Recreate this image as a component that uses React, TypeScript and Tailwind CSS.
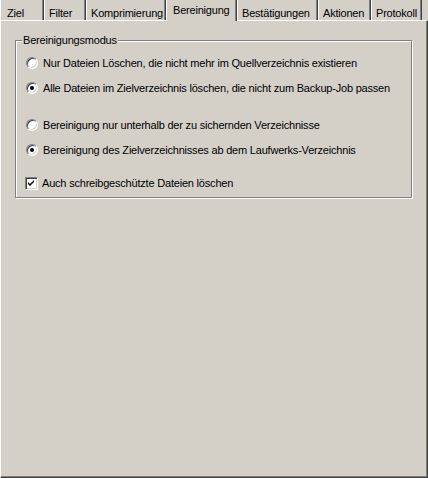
import React from 'react';

interface Tab {
  label: string;
  width: number;
}

const tabs: Tab[] = [
  { label: 'Ziel', width: 44 },
  { label: 'Filter', width: 42 },
  { label: 'Komprimierung', width: 80 },
  { label: 'Bereinigung', width: 71 },
  { label: 'Bestätigungen', width: 81 },
  { label: 'Aktionen', width: 53 },
  { label: 'Protokoll', width: 51 },
];

const activeTab = 'Bereinigung';

const Radio: React.FC<{ checked?: boolean }> = ({ checked }) => (
  <span className="relative flex h-[12px] w-[12px] shrink-0 items-center justify-center rounded-full border border-t-[#808080] border-l-[#808080] border-r-white border-b-white bg-white shadow-[inset_1px_1px_0_#404040,inset_-1px_-1px_0_#d4d0c8]">
    {checked && <span className="h-[4px] w-[4px] rounded-full bg-black" />}
  </span>
);

const Checkbox: React.FC<{ checked?: boolean }> = ({ checked }) => (
  <span className="flex h-[13px] w-[13px] shrink-0 items-center justify-center border border-t-[#808080] border-l-[#808080] border-r-white border-b-white bg-white shadow-[inset_1px_1px_0_#404040,inset_-1px_-1px_0_#d4d0c8]">
    {checked && (
      <svg width="7" height="7" viewBox="0 0 7 7">
        <path d="M0 2 L2 4 L6 0 L6 2 L2 6 L0 4 Z" fill="#000" />
      </svg>
    )}
  </span>
);

const App: React.FC = () => {
  return (
    <div
      className="h-[478px] w-[428px] overflow-hidden bg-[#d4d0c8] text-[11px] tracking-[-0.2px] text-black"
      style={{ fontFamily: '"Liberation Sans", Arial, sans-serif' }}
    >
      {/* Reiter */}
      <div className="flex h-[20px] items-start">
        {tabs.map((tab, i) => {
          const active = tab.label === activeTab;
          return active ? (
            <div
              key={tab.label}
              style={{ width: tab.width }}
              className="relative z-10 flex h-[21px] shrink-0 items-start border-l border-l-white bg-[#d4d0c8] pl-[6px] pt-[2px] shadow-[inset_-1px_0_0_#404040,inset_-2px_0_0_#808080]"
            >
              {tab.label}
            </div>
          ) : (
            <div
              key={tab.label}
              style={{ width: tab.width }}
              className={`flex h-[20px] shrink-0 items-start border-l border-l-white pt-[5px] shadow-[inset_-1px_0_0_#404040,inset_-2px_0_0_#808080] ${i === 0 ? 'pl-[6px]' : 'pl-[4px]'}`}
            >
              {tab.label}
            </div>
          );
        })}
      </div>

      {/* Seite */}
      <div className="h-[458px] border-t border-l border-t-white border-l-white border-r border-b border-r-[#404040] border-b-[#404040] shadow-[inset_-1px_-1px_0_#808080]">
        <div className="relative ml-[14px] mt-[19px] h-[158px] w-[397px] border border-[#808080] shadow-[inset_1px_1px_0_#fff,1px_1px_0_#fff]">
          <span className="absolute left-[6px] top-[-8px] bg-[#d4d0c8] px-[1px] leading-[14px]">
            Bereinigungsmodus
          </span>

          <div className="flex flex-col pt-[14px]">
            <label className="flex h-[16px] items-center gap-[5px] pl-[10px]">
              <Radio />
              <span>Nur Dateien Löschen, die nicht mehr im Quellverzeichnis existieren</span>
            </label>
            <label className="mt-[9px] flex h-[16px] items-center gap-[5px] pl-[10px]">
              <Radio checked />
              <span>Alle Dateien im Zielverzeichnis löschen, die nicht zum Backup-Job passen</span>
            </label>
            <label className="mt-[21px] flex h-[16px] items-center gap-[5px] pl-[10px]">
              <Radio />
              <span>Bereinigung nur unterhalb der zu sichernden Verzeichnisse</span>
            </label>
            <label className="mt-[9px] flex h-[16px] items-center gap-[5px] pl-[10px]">
              <Radio checked />
              <span>Bereinigung des Zielverzeichnisses ab dem Laufwerks-Verzeichnis</span>
            </label>
            <label className="mt-[17px] flex h-[16px] items-center gap-[4px] pl-[9px]">
              <Checkbox checked />
              <span>Auch schreibgeschützte Dateien löschen</span>
            </label>
          </div>
        </div>
      </div>
    </div>
  );
};

export default App;
